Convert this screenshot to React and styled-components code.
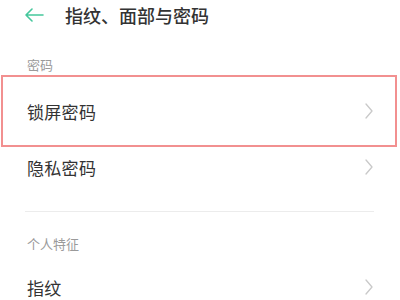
import React from "react";
import styled, { createGlobalStyle } from "styled-components";

const GlobalStyle = createGlobalStyle`
  html, body {
    margin: 0;
    padding: 0;
    background: #fff;
  }
  body {
    font-family: "Noto Sans CJK SC", "Noto Sans", sans-serif;
    overflow: hidden;
  }
`;

const Page = styled.div`
  width: 400px;
  height: 300px;
  overflow: hidden;
  background: #fff;
`;

const Header = styled.header`
  height: 30px;
  display: flex;
  align-items: center;
  padding-left: 24px;
  gap: 21px;
`;

const Title = styled.h1`
  margin: 0;
  font-size: 18px;
  font-weight: 500;
  color: #333;
  line-height: 30px;
`;

const GroupLabel = styled.div`
  padding: ${(p) => p.$top}px 27px 0;
  font-size: 13px;
  line-height: 24px;
  color: #9a9a9a;
`;

const Row = styled.div`
  position: relative;
  height: 56px;
  margin-top: ${(p) => p.$top || 0}px;
  padding: 0 27px;
  display: flex;
  align-items: center;
  justify-content: space-between;
`;

const RowText = styled.span`
  font-size: 17px;
  color: #333;
  letter-spacing: 0.3px;
`;

const Highlight = styled.div`
  position: absolute;
  top: -8px;
  bottom: -8px;
  left: 1px;
  right: 3px;
  border: 2px solid #f29090;
  pointer-events: none;
`;

const Divider = styled.hr`
  margin: 16px 26px 0 25px;
  border: 0;
  border-top: 1px solid #ececec;
`;

function BackArrow() {
  return (
    <svg width="20" height="14" viewBox="0 0 20 14" fill="none">
      <path
        d="M19 7H2M8 1L2 7l6 6"
        stroke="#45c79c"
        strokeWidth="1.6"
        strokeLinecap="round"
        strokeLinejoin="round"
      />
    </svg>
  );
}

function Chevron() {
  return (
    <svg width="8" height="16" viewBox="0 0 8 16" fill="none">
      <path d="M1 1l6 7-6 7" stroke="#c9c9c9" strokeWidth="1.3" strokeLinecap="round" strokeLinejoin="round" />
    </svg>
  );
}

export default function App() {
  return (
    <Page>
      <GlobalStyle />
      <Header>
        <BackArrow />
        <Title>指纹、面部与密码</Title>
      </Header>

      <GroupLabel $top={23}>密码</GroupLabel>
      <Row $top={6}>
        <RowText>锁屏密码</RowText>
        <Chevron />
        <Highlight />
      </Row>
      <Row>
        <RowText>隐私密码</RowText>
        <Chevron />
      </Row>

      <Divider />

      <GroupLabel $top={20}>个人特征</GroupLabel>
      <Row $top={3}>
        <RowText>指纹</RowText>
        <Chevron />
      </Row>
    </Page>
  );
}
